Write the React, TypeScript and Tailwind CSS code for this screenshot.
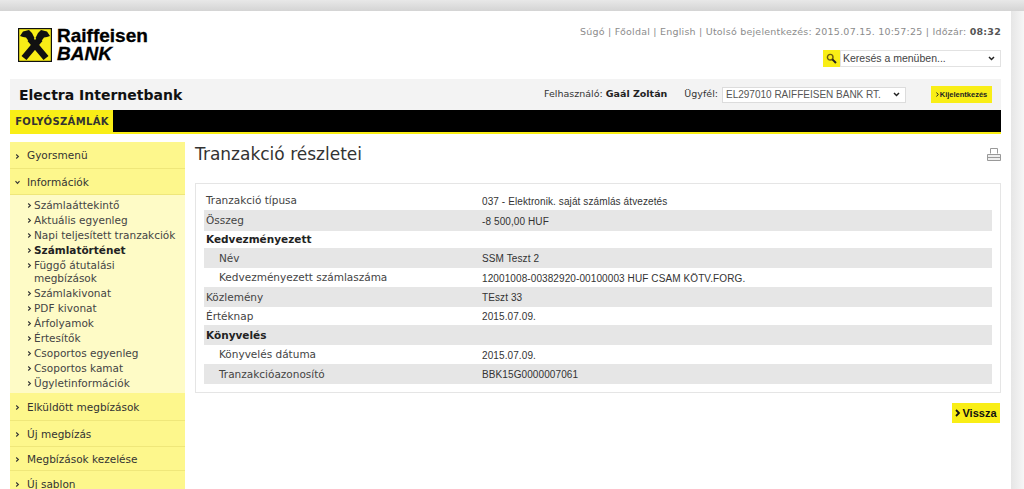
import React from 'react';

const verdana = "font-['DejaVu_Sans',sans-serif]";
const arial = "font-['Liberation_Sans',Arial,sans-serif]";

const subItems = [
  'Számlaáttekintő',
  'Aktuális egyenleg',
  'Napi teljesített tranzakciók',
  'Számlatörténet',
  'Függő átutalási megbízások',
  'Számlakivonat',
  'PDF kivonat',
  'Árfolyamok',
  'Értesítők',
  'Csoportos egyenleg',
  'Csoportos kamat',
  'Ügyletinformációk',
];

const rows = [
  { label: 'Tranzakció típusa', value: '037 - Elektronik. saját számlás átvezetés', h: 'h-[19px]', gray: false },
  { label: 'Összeg', value: '-8 500,00 HUF', h: 'h-[21px]', gray: true },
  { label: 'Kedvezményezett', value: '', h: 'h-[17px]', gray: false, bold: true },
  { label: 'Név', value: 'SSM Teszt 2', h: 'h-[20px]', gray: true, indent: true },
  { label: 'Kedvezményezett számlaszáma', value: '12001008-00382920-00100003 HUF CSAM KÖTV.FORG.', h: 'h-[19px]', gray: false, indent: true },
  { label: 'Közlemény', value: 'TEszt 33', h: 'h-[20px]', gray: true },
  { label: 'Értéknap', value: '2015.07.09.', h: 'h-[18px]', gray: false },
  { label: 'Könyvelés', value: '', h: 'h-[20px]', gray: true, bold: true },
  { label: 'Könyvelés dátuma', value: '2015.07.09.', h: 'h-[19px]', gray: false, indent: true },
  { label: 'Tranzakcióazonosító', value: 'BBK15G0000007061', h: 'h-[20px]', gray: true, indent: true },
];

function Chevron({ down }: { down?: boolean }) {
  return (
    <svg width="5" height="5" viewBox="0 0 5 5" className="shrink-0">
      {down ? (
        <path d="M0.5 1.2 L2.5 3.4 L4.5 1.2" fill="none" stroke="#333" strokeWidth="1.1" />
      ) : (
        <path d="M1.2 0.5 L3.4 2.5 L1.2 4.5" fill="none" stroke="#333" strokeWidth="1.1" />
      )}
    </svg>
  );
}

function Logo() {
  return (
    <svg width="34" height="34" viewBox="0 0 34 34" className="shrink-0">
      <rect x="0.6" y="0.6" width="32.8" height="32.8" fill="#f9ee16" stroke="#111" strokeWidth="1.2" />
      <path d="M6 30 L22 11 M28 30 L12 11" fill="none" stroke="#111" strokeWidth="6.5" />
      <path d="M2 8 L5 3.5 L11 2 L14 5 L16.5 10 L12 15 L8 9.5 L5 9 Z" fill="#111" />
      <path d="M32 8 L29 3.5 L23 2 L20 5 L17.5 10 L22 15 L26 9.5 L29 9 Z" fill="#111" />
    </svg>
  );
}

function MenuHead({ label, down, h }: { label: string; down?: boolean; h: string }) {
  return (
    <div className={`${h} flex items-center gap-[7px] pl-[5px] pt-[2px] bg-[#fdf78c] border-b border-[#efe77a] text-[10.5px] text-[#333]`}>
      <Chevron down={down} />
      <span>{label}</span>
    </div>
  );
}

export default function App() {
  return (
    <div className={`${verdana} w-[1024px] h-[489px] overflow-hidden bg-white flex flex-col`}>
      <div className="h-[11px] shrink-0 bg-linear-to-b from-[#e8e8e8] to-[#d4d4d4]" />
      <div className="flex flex-1 min-h-0">
        <div className="w-[1011px] shrink-0 pl-[10px] pr-[10px] bg-white">
          <header className="h-[68px] flex justify-between">
            <div className="flex items-start pl-[8px] pt-[17px] gap-[5px]">
              <Logo />
              <div className={`${arial} text-black font-bold text-[19px] leading-[18px] -mt-px [-webkit-text-stroke:0.3px_#000]`}>
                <div>Raiffeisen</div>
                <div className="italic">BANK</div>
              </div>
            </div>
            <div className="flex flex-col items-end">
              <div className="pt-[15px] text-[9.5px] leading-[12px] tracking-[0.22px] text-[#8c8c8c] whitespace-nowrap">
                Súgó | Főoldal | English | Utolsó bejelentkezés: 2015.07.15. 10:57:25 | Időzár:{' '}
                <b className="text-[#555]">08:32</b>
              </div>
              <div className="mt-[12px] flex h-[17px]">
                <div className="w-[17px] bg-[#f9ee16] flex items-center justify-center">
                  <svg width="11" height="11" viewBox="0 0 11 11">
                    <circle cx="4.2" cy="4.2" r="2.8" fill="none" stroke="#6b5a10" strokeWidth="1.4" />
                    <path d="M6.4 6.4 L10 10" stroke="#222" strokeWidth="2" />
                  </svg>
                </div>
                <div className={`${arial} w-[161px] border border-[#e2e2e2] flex items-center justify-between pl-[2px] pr-[5px] text-[10.5px] text-[#444]`}>
                  <span>Keresés a menüben...</span>
                  <svg width="7" height="5" viewBox="0 0 7 5">
                    <path d="M1 1 L3.5 3.5 L6 1" fill="none" stroke="#222" strokeWidth="1.5" />
                  </svg>
                </div>
              </div>
            </div>
          </header>

          <div className="h-[31px] bg-[#f3f3f3] flex items-center justify-between pl-[9px] pr-[9px]">
            <div className="font-bold text-[14px] text-[#111] pt-[2px]">Electra Internetbank</div>
            <div className="flex items-center text-[9.5px] text-[#333]">
              <span>Felhasználó:&nbsp;</span>
              <b className="text-[#222]">Gaál Zoltán</b>
              <span className="ml-[17px]">Ügyfél:&nbsp;</span>
              <div className={`${arial} w-[184px] h-[16px] ml-px border border-[#dcdcdc] bg-white flex items-center justify-between pl-[3px] pr-[5px] text-[10px] text-[#555]`}>
                <span>EL297010 RAIFFEISEN BANK RT.</span>
                <svg width="7" height="5" viewBox="0 0 7 5">
                  <path d="M1 1 L3.5 3.5 L6 1" fill="none" stroke="#222" strokeWidth="1.5" />
                </svg>
              </div>
              <div className={`${arial} ml-[25px] h-[17px] w-[61px] bg-[#f9ee16] flex items-center justify-center gap-px text-[7.5px] font-bold text-[#222]`}>
                <svg width="3" height="5" viewBox="0 0 3 5">
                  <path d="M0.5 0.5 L2.2 2.5 L0.5 4.5" fill="none" stroke="#222" strokeWidth="1" />
                </svg>
                Kijelentkezés
              </div>
            </div>
          </div>

          <nav className="h-[24px] bg-black border-b-2 border-[#f9ee16]">
            <div className="h-[22px] w-[103px] bg-[#f9ee16] flex items-center justify-center pl-px text-[10px] font-bold text-[#333] tracking-[0.35px]">
              FOLYÓSZÁMLÁK
            </div>
          </nav>

          <div className="flex gap-[10px] pt-[8px]">
            <aside className="w-[175px] shrink-0">
              <MenuHead label="Gyorsmenü" h="h-[27px]" />
              <MenuHead label="Információk" down h="h-[26px]" />
              <ul className="h-[198px] bg-[#fefbc6] pt-[3px] pl-[17px] pr-[8px] text-[10.5px] text-[#444]">
                {subItems.map((item) => (
                  <li key={item} className="flex items-start gap-[2px] py-px leading-[13px]">
                    <span className="mt-[4px]"><Chevron /></span>
                    <span className={item === 'Számlatörténet' ? 'font-bold text-[#222]' : ''}>{item}</span>
                  </li>
                ))}
              </ul>
              <MenuHead label="Elküldött megbízások" h="h-[28px]" />
              <MenuHead label="Új megbízás" h="h-[26px]" />
              <MenuHead label="Megbízások kezelése" h="h-[24px]" />
              <MenuHead label="Új sablon" h="h-[26px]" />
            </aside>

            <main className="flex-1 min-w-0">
              <div className="h-[41px] flex items-start justify-between">
                <h1 className="text-[17px] leading-[24px] text-[#333]">Tranzakció részletei</h1>
                <svg width="14" height="13" viewBox="0 0 14 13" className="mt-[6px]">
                  <path d="M3.5 5.5 V0.5 H10.5 V5.5" fill="none" stroke="#999" />
                  <path d="M0.5 12.5 V6.5 H13.5 V12.5 Z M0.5 9.5 H13.5" fill="#eee" stroke="#999" />
                </svg>
              </div>
              <div className="h-[210px] border border-[#e5e5e5] pt-[7px] px-[8px]">
                {rows.map((r) => (
                  <div
                    key={r.label}
                    className={`${r.h} flex items-center pt-px ${r.gray ? 'bg-[#e6e6e6]' : 'bg-white'}`}
                  >
                    <div
                      className={`w-[278px] shrink-0 text-[10.5px] ${r.indent ? 'pl-[15px]' : 'pl-[2px]'} ${r.bold ? 'font-bold text-[#222]' : 'text-[#444]'}`}
                    >
                      {r.label}
                    </div>
                    <div className={`${arial} text-[10px] tracking-[0.1px] text-[#333]`}>{r.value}</div>
                  </div>
                ))}
              </div>
              <div className="flex justify-end pt-[10px] pr-px">
                <div className={`${arial} h-[20px] w-[48px] bg-[#f9ee16] flex items-center justify-center gap-px text-[11px] font-bold text-[#111]`}>
                  <svg width="6" height="8" viewBox="0 0 6 8">
                    <path d="M1 1 L4 4 L1 7" fill="none" stroke="#111" strokeWidth="1.8" />
                  </svg>
                  Vissza
                </div>
              </div>
            </main>
          </div>
        </div>
        <div className="flex-1 bg-linear-to-r from-[#e6e6e6] to-[#f6f6f6]" />
      </div>
    </div>
  );
}
